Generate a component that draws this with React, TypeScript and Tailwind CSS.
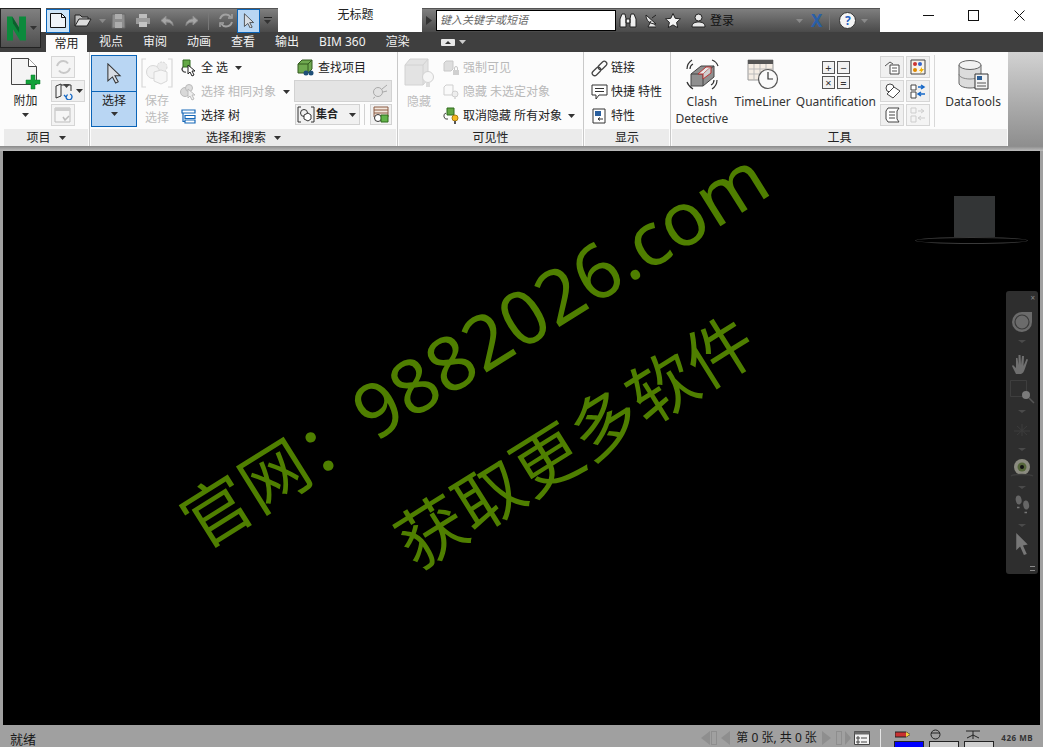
import React from "react";

const FONT = { fontFamily: '"Noto Sans", "Noto Sans CJK SC", sans-serif' };

function Caret({ light = false, className = "" }: { light?: boolean; className?: string }) {
  return (
    <svg width="7" height="4" viewBox="0 0 7 4" className={className}>
      <path d="M0 0h7L3.5 4z" fill={light ? "#8a8a8a" : "#333"} />
    </svg>
  );
}

/* ---- quick access icons ---- */
function QatNew() {
  return (
    <svg width="18" height="17" viewBox="0 0 18 17">
      <path d="M1.500 1.500h11l4 4v10h-15z" fill="#eef3f8" stroke="#111" />
      <path d="M12.500 1.500v4h4" fill="none" stroke="#111" />
    </svg>
  );
}
function QatOpen() {
  return (
    <svg width="18" height="15" viewBox="0 0 18 15">
      <path d="M1 13V2h5l2 2h6v2" fill="#bbb" stroke="#222" />
      <path d="M1 13l4-7h12l-4 7z" fill="#ddd" stroke="#222" />
    </svg>
  );
}
function QatSave() {
  return (
    <svg width="15" height="16" viewBox="0 0 15 16">
      <path d="M1 1h13v14H1z" fill="#8d8d8d" stroke="#666" />
      <path d="M4 1h7v5H4zM4 9h7v6H4z" fill="#adadad" />
    </svg>
  );
}
function QatPrint() {
  return (
    <svg width="16" height="15" viewBox="0 0 16 15">
      <path d="M4 1h8v4H4z" fill="#bdbdbd" />
      <path d="M1 5h14v6H1z" fill="#9c9c9c" />
      <path d="M4 9h8v5H4z" fill="#c4c4c4" />
    </svg>
  );
}
function QatUndo({ flip = false }: { flip?: boolean }) {
  return (
    <svg width="15" height="12" viewBox="0 0 15 12" className={flip ? "-scale-x-100" : ""}>
      <path d="M6 1L1 5.500 6 10V7c3 0 5 .5 7 3.500C13 6.500 10 4 6 4z" fill="#a6a6a6" stroke="#8c8c8c" />
    </svg>
  );
}
function QatRefresh() {
  return (
    <svg width="16" height="15" viewBox="0 0 16 15" fill="none" stroke="#a2a2a2" strokeWidth="2">
      <path d="M2 6c1-3 3-4.500 6-4.500 2 0 3.500 1 4.500 2.500" />
      <path d="M14 9c-1 3-3 4.500-6 4.500-2 0-3.500-1-4.500-2.500" />
      <path d="M14 1v4h-4M2 14v-4h4" strokeWidth="1.500" />
    </svg>
  );
}
function Arrow({ size = 17, fill = "#d8dde4" }: { size?: number; fill?: string }) {
  return (
    <svg width={size} height={size * 1.3} viewBox="0 0 17 22">
      <path d="M2 1l13 12.500H9.500l3.500 6.500-2.800 1.300-3.300-6.500L2 19z" fill={fill} stroke="#333" strokeWidth="1.100" />
    </svg>
  );
}

/* ---- ribbon icons ---- */
function AppendIcon() {
  return (
    <svg width="32" height="34" viewBox="0 0 32 34">
      <path d="M1.500 1.500h17l8 8v18h-25z" fill="#f4f4f4" stroke="#444" />
      <path d="M18.500 1.500v8h8" fill="#fff" stroke="#444" />
      <path d="M21 18h4v5h5v4h-5v5h-4v-5h-5v-4h5z" fill="#12a23a" stroke="#0a7a2a" strokeWidth=".5" />
    </svg>
  );
}
function SmallBox({ children, disabled = false, w = "w-[24px]" }: { children?: React.ReactNode; disabled?: boolean; w?: string }) {
  return (
    <div className={`${w} h-[22px] flex items-center justify-center border border-[#d6d6d6] ${disabled ? "bg-[#f4f4f4]" : "bg-[#f0f0f0]"}`}>
      {children}
    </div>
  );
}
function SyncIcon() {
  return (
    <svg width="17" height="16" viewBox="0 0 17 16" fill="none" stroke="#c8c8c8" strokeWidth="2">
      <path d="M2 7c1-3 3-5 6.500-5 2 0 3.500 1 4.500 2.500M15 9c-1 3-3 5-6.500 5-2 0-3.500-1-4.500-2.500" />
    </svg>
  );
}
function SheetsIcon() {
  return (
    <svg width="20" height="18" viewBox="0 0 20 18">
      <path d="M2 4l5-2v12l-5 2z" fill="#f3f3f3" stroke="#333" />
      <path d="M7 3h10v6" fill="none" stroke="#333" />
      <path d="M9 2h7l-3.500 4z" fill="#444" />
      <path d="M16 12a3 3 0 1 1-4 3M10 13l2 2 1.500-2.500" fill="none" stroke="#1266c4" strokeWidth="1.300" />
    </svg>
  );
}
function WindowCheckIcon() {
  return (
    <svg width="18" height="17" viewBox="0 0 18 17">
      <path d="M1 1h15v14H1z" fill="#f6f6f6" stroke="#bdbdbd" />
      <path d="M1 1h15v3H1z" fill="#cfcfcf" />
      <path d="M9 10l2 3 4-4" fill="none" stroke="#bbb" strokeWidth="1.500" />
    </svg>
  );
}
function SaveSelectionIcon() {
  return (
    <svg width="32" height="30" viewBox="0 0 32 30" fill="none" stroke="#d8d8d8">
      <path d="M5 1H1v28h4M27 1h4v28h-4" strokeWidth="1.200" />
      <circle cx="21" cy="9" r="5" fill="#ececec" strokeDasharray="2 1" />
      <circle cx="12" cy="14" r="6.500" fill="#f2f2f2" />
      <path d="M13 14l7-2 6 2v9l-6 3-7-3z" fill="#f6f6f6" />
    </svg>
  );
}
function SelectAllIcon() {
  return (
    <svg width="18" height="18" viewBox="0 0 18 18">
      <path d="M4 8a3 3 0 0 0 3 5" fill="none" stroke="#444" strokeWidth="1.200" />
      <path d="M4 1h7v7H4z" fill="#64a846" stroke="#2f6a1c" />
      <path d="M9 6l7 6h-3l2 4-2 1-2-4-2 2z" fill="#fff" stroke="#222" />
    </svg>
  );
}
function SameIcon() {
  return (
    <svg width="18" height="18" viewBox="0 0 18 18">
      <circle cx="6" cy="9" r="4.500" fill="#d8d8d8" stroke="#bbb" />
      <circle cx="10" cy="5" r="3.500" fill="#ddd" stroke="#bbb" />
      <path d="M9 6l7 6h-3l2 4-2 1-2-4-2 2z" fill="#eee" stroke="#bcbcbc" />
    </svg>
  );
}
function TreeIcon() {
  return (
    <svg width="15" height="15" viewBox="0 0 15 15" fill="#fff" stroke="#1668b8" strokeWidth="1.200">
      <path d="M1 1h13v3H1zM4 6.500h10v3H4zM4 11h10v3H4z" />
      <path d="M2 4v8.500h2" fill="none" />
    </svg>
  );
}
function FindIcon() {
  return (
    <svg width="17" height="18" viewBox="0 0 17 18">
      <path d="M1 5l4-4h10v9l-4 4H1z" fill="#6fa94f" stroke="#33591f" />
      <path d="M1 5h10v9M11 5l4-4" fill="none" stroke="#33591f" />
      <circle cx="9" cy="14" r="2.500" fill="#1f4f78" />
      <circle cx="14" cy="14" r="2.500" fill="#1f4f78" />
    </svg>
  );
}
function SearchGhost() {
  return (
    <svg width="17" height="15" viewBox="0 0 17 15" fill="none" stroke="#a9a9a9">
      <circle cx="6" cy="8" r="4.500" fill="#e2e2e2" />
      <path d="M3 13l-2 1.500M10 5l5-4M11 8l4-1" />
    </svg>
  );
}
function SetIcon() {
  return (
    <svg width="18" height="17" viewBox="0 0 18 17" fill="none" stroke="#333">
      <path d="M4 1H1v15h3M14 1h3v15h-3" />
      <circle cx="7" cy="7" r="3.500" />
      <path d="M7 9l4-2 3 2v4l-3 2-4-2z" fill="#fff" />
    </svg>
  );
}
function SetManageIcon() {
  return (
    <svg width="18" height="17" viewBox="0 0 18 17">
      <path d="M2 1h14v10H2z" fill="#f2e6dc" stroke="#8a5b42" />
      <path d="M2 4h14M2 7h14" stroke="#8a5b42" />
      <circle cx="6" cy="12" r="3.500" fill="#fff" stroke="#333" />
      <path d="M9 9h7v7H9z" fill="#62b44a" stroke="#2f6a1c" />
    </svg>
  );
}
function HideBigIcon() {
  return (
    <svg width="32" height="32" viewBox="0 0 32 32">
      <path d="M2 8l5-6h18v20l-5 6H2z" fill="#e3e3e3" stroke="#d2d2d2" />
      <path d="M2 8h18v20M20 8l5-6" fill="none" stroke="#d2d2d2" />
      <circle cx="25" cy="20" r="5.500" fill="#f6f6f6" stroke="#d2d2d2" />
      <path d="M23 26h4v4h-4z" fill="#ddd" />
    </svg>
  );
}
function LockIcon() {
  return (
    <svg width="17" height="16" viewBox="0 0 17 16">
      <path d="M1 3l2-2h7v8l-2 2H1z" fill="#dedede" stroke="#c8c8c8" />
      <path d="M10 10h6v5h-6z" fill="#d0d0d0" />
      <path d="M11.500 10V8a1.500 1.500 0 0 1 3 0v2" fill="none" stroke="#c8c8c8" />
    </svg>
  );
}
function HideUnselectedIcon() {
  return (
    <svg width="17" height="16" viewBox="0 0 17 16">
      <path d="M1 3l2-2h7v10H1z" fill="#fafafa" stroke="#cfcfcf" />
      <circle cx="12" cy="10" r="3" fill="#eee" stroke="#cfcfcf" />
      <path d="M11 13h2v2h-2z" fill="#ddd" />
    </svg>
  );
}
function UnhideIcon() {
  return (
    <svg width="17" height="18" viewBox="0 0 17 18">
      <path d="M3 6a3 3 0 0 0 2 6" fill="none" stroke="#444" />
      <path d="M4 1h7v7H4z" fill="#62a644" stroke="#2f6a1c" />
      <circle cx="12" cy="11" r="3" fill="#f4b820" stroke="#a87b10" />
      <path d="M11 14h2v3h-2z" fill="#555" />
    </svg>
  );
}
function ChainIcon() {
  return (
    <svg width="17" height="17" viewBox="0 0 17 17" fill="none" stroke="#444" strokeWidth="1.300">
      <rect x=".5" y="9" width="10" height="5" rx="2.500" transform="rotate(-45 5.500 11.500)" />
      <rect x="6.500" y="3" width="10" height="5" rx="2.500" transform="rotate(-45 11.500 5.500)" />
    </svg>
  );
}
function BubbleIcon() {
  return (
    <svg width="17" height="17" viewBox="0 0 17 17" fill="#fff" stroke="#333">
      <path d="M1 1h15v10H8l-3 4v-4H1z" />
      <path d="M4 4.500h9M4 7.500h9" />
    </svg>
  );
}
function PropsIcon() {
  return (
    <svg width="15" height="16" viewBox="0 0 15 16">
      <path d="M1 1h12v14H1z" fill="#fff" stroke="#333" />
      <path d="M3 3h6v5H3z" fill="#2a5f9e" />
      <path d="M6 11h5M6 11l2-1.500M6 11l2 1.500" stroke="#333" fill="none" />
    </svg>
  );
}
function ClashIcon() {
  return (
    <svg width="36" height="34" viewBox="0 0 36 34">
      <path d="M7 16l10-8h13v11l-11 9H7z" fill="#8f8f8f" stroke="#444" />
      <path d="M7 16h12v12M19 16l11-8" fill="none" stroke="#444" />
      <path d="M14 16l8-7h5l-8 7z" fill="#e8e8e8" stroke="#b33" />
      <path d="M19 16v5l8-6V9" fill="#d0d0d0" stroke="#b33" />
      <g fill="none" stroke="#333" strokeWidth="1.200">
        <path d="M3 11c0-4 2-7 5-9M6 11c0-2 1-4 3-5" />
        <path d="M33 22c0 4-2 7-5 9M30 22c0 2-1 4-3 5" />
        <path d="M28 2c3 1 5 3 6 6M3 24c1 3 3 5 6 7" />
      </g>
    </svg>
  );
}
function TimeLinerIcon() {
  return (
    <svg width="32" height="31" viewBox="0 0 32 31">
      <path d="M1 1h25v20H1z" fill="#f5ede4" stroke="#999" />
      <path d="M1 1h25v4H1z" fill="#555" />
      <path d="M1 10h25M1 15h25M7 5v16M13 5v16M19 5v16" stroke="#bbb" />
      <circle cx="21" cy="20" r="9.500" fill="#fafafa" stroke="#555" strokeWidth="1.200" />
      <path d="M21 13v7h5" fill="none" stroke="#333" strokeWidth="1.200" />
    </svg>
  );
}
function QuantIcon() {
  const cells = ["+", "−", "×", "="];
  return (
    <div className="grid grid-cols-2 gap-[2px] w-[28px]">
      {cells.map((c) => (
        <div key={c} className="w-[13px] h-[13px] bg-[#f2f2f2] border border-[#555] flex items-center justify-center text-[11px] leading-none text-[#333]">
          {c}
        </div>
      ))}
    </div>
  );
}
function DataToolsIcon() {
  return (
    <svg width="32" height="32" viewBox="0 0 32 32">
      <path d="M2 6v18c0 3 5 5 11 5s11-2 11-5V6" fill="#dcdcdc" stroke="#666" />
      <ellipse cx="13" cy="6" rx="11" ry="4.500" fill="#f2f2f2" stroke="#666" />
      <path d="M2 15c0 3 5 5 11 5s11-2 11-5" fill="none" stroke="#888" />
      <path d="M18 15h13v15H18z" fill="#f4f4f4" stroke="#333" />
      <path d="M20 17h5v4h-5z" fill="#2d5f95" />
      <path d="M20 24h9M20 27h9" stroke="#555" />
    </svg>
  );
}
function MiniTool({ kind }: { kind: number }) {
  const icons: React.ReactNode[] = [
    <svg key="a" width="16" height="15" viewBox="0 0 16 15"><path d="M1 6l5-4 3 2" fill="none" stroke="#555" /><path d="M6 5h9v9H6z" fill="#fff" stroke="#444" /><path d="M8 8h5M8 11h5" stroke="#555" /></svg>,
    <svg key="b" width="16" height="16" viewBox="0 0 16 16"><path d="M1 1h14v14H1z" fill="#f7f2ea" stroke="#444" /><circle cx="5" cy="5" r="2" fill="#c33" /><circle cx="10" cy="5" r="2" fill="#36c" /><circle cx="5" cy="11" r="2" fill="#d80" /><path d="M12 8l-3 4h2l-1 3 4-5h-2z" fill="#f2b200" /></svg>,
    <svg key="c" width="17" height="16" viewBox="0 0 17 16" fill="#fff" stroke="#444"><circle cx="6" cy="5" r="4" /><path d="M3 11l7-7 6 4-7 7z" /></svg>,
    <svg key="d" width="16" height="16" viewBox="0 0 16 16"><path d="M1 2h5v5H1zM1 9h5v6H1z" fill="#fff" stroke="#444" /><path d="M8 4h5M11 2l3 2-3 2" fill="none" stroke="#1668c8" strokeWidth="1.500" /><path d="M15 11H9M11 9l-3 2 3 2" fill="none" stroke="#1668c8" strokeWidth="1.500" /></svg>,
    <svg key="e" width="15" height="16" viewBox="0 0 15 16" fill="#fff" stroke="#444"><path d="M3 1h11l-2 3v8l2 3H3l-2-3V4z" /><path d="M4 5h6M4 8h6M4 11h6" /></svg>,
    <svg key="f" width="16" height="16" viewBox="0 0 16 16" fill="none" stroke="#cdcdcd"><path d="M1 1h5v5H1zM1 9h5v6H1z" /><path d="M8 4h5M11 2l3 2-3 2M15 11H9M11 9l-3 2 3 2" /></svg>,
  ];
  return icons[kind];
}

/* ---- ribbon structure ---- */
function Panel({ title, caret = false, width, children }: { title: string; caret?: boolean; width: string; children: React.ReactNode }) {
  return (
    <div className={`${width} shrink-0 flex flex-col border-r border-[#c9c9c9]`}>
      <div className="h-[77px] flex">{children}</div>
      <div className="h-[17px] mx-[1px] bg-[#ebebeb] flex items-center justify-center gap-[8px] text-[12px] text-[#222]">
        {title}
        {caret && <Caret />}
      </div>
    </div>
  );
}
function Row({ icon, label, muted = false, caret = false, gap = "gap-[5px]" }: { icon: React.ReactNode; label: string; muted?: boolean; caret?: boolean; gap?: string }) {
  return (
    <div className={`h-[24px] flex items-center ${gap} text-[12px] whitespace-pre ${muted ? "text-[#b9b9b9]" : "text-[#222]"}`}>
      <div className="w-[18px] flex justify-center">{icon}</div>
      <span>{label}</span>
      {caret && <Caret className="ml-[3px]" />}
    </div>
  );
}
function ToolColumn({ icon, width, children }: { icon: React.ReactNode; width: string; children: React.ReactNode }) {
  return (
    <div className={`${width} flex flex-col items-center pt-[4px]`}>
      <div className="h-[37px] flex items-center">{icon}</div>
      {children}
    </div>
  );
}

function Ribbon() {
  return (
    <div className="h-[94px] flex bg-[#fcfcfc] pl-[3px]">
      <Panel title="项目" caret width="w-[87px]">
        <div className="w-[45px] flex flex-col items-center pt-[5px]">
          <AppendIcon />
          <div className="text-[12px] text-[#222] leading-[16px] mt-[2px]">附加</div>
          <Caret className="mt-[4px]" />
        </div>
        <div className="flex flex-col gap-[2px] pt-[4px] pl-[3px]">
          <SmallBox disabled><SyncIcon /></SmallBox>
          <SmallBox w="w-[34px]">
            <div className="flex items-center gap-[2px]"><SheetsIcon /><Caret /></div>
          </SmallBox>
          <SmallBox disabled><WindowCheckIcon /></SmallBox>
        </div>
      </Panel>
      <Panel title="选择和搜索" caret width="w-[308px]">
        <div className="w-[46px] h-[72px] mt-[3px] ml-[1px] bg-[#b9d6f3] border border-[#0a64b8] flex flex-col items-center">
          <div className="h-[36px] flex items-center justify-center border-b border-[#0a64b8] w-full">
            <Arrow size={16} />
          </div>
          <div className="text-[12px] text-[#222] leading-[16px] mt-[1px]">选择</div>
          <Caret className="mt-[3px]" />
        </div>
        <div className="w-[40px] flex flex-col items-center pt-[6px] text-[12px] leading-[17px] text-[#bdbdbd]">
          <SaveSelectionIcon />
          <div className="mt-[4px]">保存</div>
          <div>选择</div>
        </div>
        <div className="w-[117px] pt-[4px] pl-[2px]">
          <Row icon={<SelectAllIcon />} label="全 选" gap="gap-[4px]" caret />
          <Row icon={<SameIcon />} label="选择 相同对象" muted gap="gap-[4px]" caret />
          <Row icon={<TreeIcon />} label="选择 树" gap="gap-[4px]" />
        </div>
        <div className="w-[99px] pt-[4px]">
          <div className="h-[24px] pl-[3px] flex items-center gap-[4px] text-[12px] text-[#222]">
            <FindIcon />
            查找项目
          </div>
          <div className="w-[98px] h-[22px] bg-[#e4e4e4] border border-[#d2d2d2] flex items-center justify-end pr-[2px]">
            <SearchGhost />
          </div>
          <div className="flex items-center mt-[2px]">
            <div className="w-[65px] h-[21px] ml-[1px] bg-[#f1f1f1] border border-[#d2d2d2] flex items-center pl-[1px] text-[11px] font-bold text-[#222]">
              <SetIcon />
              <span className="ml-[1px]">集合</span>
              <Caret className="ml-auto mr-[3px]" />
            </div>
            <div className="w-px h-[21px] bg-[#d2d2d2] ml-[4px]" />
            <div className="w-[22px] h-[21px] ml-[5px] bg-[#f1f1f1] border border-[#d2d2d2] flex items-center justify-center">
              <SetManageIcon />
            </div>
          </div>
        </div>
      </Panel>
      <Panel title="可见性" width="w-[186px]">
        <div className="w-[42px] flex flex-col items-center pt-[5px] text-[12px] text-[#bdbdbd]">
          <HideBigIcon />
          <div className="mt-[4px]">隐藏</div>
        </div>
        <div className="pt-[4px] pl-[2px]">
          <Row icon={<LockIcon />} label="强制可见" muted gap="gap-[3px]" />
          <Row icon={<HideUnselectedIcon />} label="隐藏 未选定对象" muted gap="gap-[3px]" />
          <Row icon={<UnhideIcon />} label="取消隐藏 所有对象" gap="gap-[3px]" caret />
        </div>
      </Panel>
      <Panel title="显示" width="w-[87px]">
        <div className="pt-[4px] pl-[6px]">
          <Row icon={<ChainIcon />} label="链接" gap="gap-[3px]" />
          <Row icon={<BubbleIcon />} label="快捷 特性" gap="gap-[3px]" />
          <Row icon={<PropsIcon />} label="特性" gap="gap-[3px]" />
        </div>
      </Panel>
      <div className="w-[337px] shrink-0 flex flex-col">
        <div className="h-[77px] flex text-[12px] text-[#333] leading-[17px]">
          <ToolColumn icon={<ClashIcon />} width="w-[62px]">
            <div>Clash</div>
            <div>Detective</div>
          </ToolColumn>
          <ToolColumn icon={<TimeLinerIcon />} width="w-[60px]">
            <div>TimeLiner</div>
          </ToolColumn>
          <ToolColumn icon={<QuantIcon />} width="w-[87px]">
            <div>Quantification</div>
          </ToolColumn>
          <div className="grid grid-cols-2 gap-[2px] content-start pt-[4px] w-[50px] ml-[1px]">
            {[0, 1, 2, 3, 4, 5].map((k) => (
              <SmallBox key={k} disabled={k === 5}><MiniTool kind={k} /></SmallBox>
            ))}
          </div>
          <div className="w-px h-[72px] mt-[3px] ml-[4px] bg-[#d8d8d8]" />
          <div className="ml-[3px]">
            <ToolColumn icon={<DataToolsIcon />} width="w-[70px]">
              <div>DataTools</div>
            </ToolColumn>
          </div>
        </div>
        <div className="h-[17px] mx-[1px] bg-[#ebebeb] flex items-center justify-center text-[12px] text-[#222]">工具</div>
      </div>
      <div className="flex-1 bg-gradient-to-b from-[#d2d2d2] to-[#8e8e8e]" />
    </div>
  );
}

function NavCaret({ className }: { className: string }) {
  return <div className={`w-0 h-0 border-x-[4px] border-x-transparent border-t-[3px] border-t-[#4a4a4a] ${className}`} />;
}

function NavBar() {
  return (
    <div className="absolute right-[2px] top-[140px] w-[32px] h-[283px] bg-[#2e2e2e] rounded-[3px] flex flex-col items-center">
      <div className="self-end mr-[3px] mt-[2px] h-[10px] text-[#8a8a8a] text-[8px] leading-[10px]">×</div>
      <svg width="22" height="22" viewBox="0 0 22 22" className="mt-[8px]">
        <path d="M11 1h10v10a10 10 0 1 1-10-10z" fill="#6b6b6b" />
        <circle cx="11" cy="11" r="7" fill="none" stroke="#3a3a3a" strokeWidth="1.200" />
      </svg>
      <NavCaret className="mt-[7px]" />
      <svg width="22" height="22" viewBox="0 0 22 22" className="mt-[10px]">
        <path d="M5 21L1 13l1-1 3 3 0-10 1.500 0 1 7 0-10h2l.5 10 1-9h2l-.5 10 3-7 1.500.5-3 9c-1 3-2 5-4 5.500z" fill="#6f6f6f" />
      </svg>
      <svg width="26" height="27" viewBox="0 0 26 27" className="mt-[4px]">
        <path d="M1.500 1.500h16v16h-16z" fill="none" stroke="#3e3e3e" />
        <circle cx="17" cy="16" r="4" fill="#7b7b7b" />
        <path d="M20 19l5 5" stroke="#555" strokeWidth="1.500" />
      </svg>
      <NavCaret className="mt-[4px]" />
      <svg width="20" height="14" viewBox="0 0 20 14" className="mt-[10px]" fill="none" stroke="#3c3c3c">
        <path d="M2 8h16M10 1v12M5 12l10-9M5 3l10 9" />
      </svg>
      <NavCaret className="mt-[11px]" />
      <svg width="26" height="24" viewBox="0 0 26 24" className="mt-[7px]">
        <circle cx="13" cy="9" r="8" fill="#8b8b80" />
        <circle cx="13" cy="9" r="4.500" fill="#55663a" />
        <circle cx="13" cy="9" r="2" fill="#111" />
        <path d="M2 18c3-2 19-2 22 0" fill="none" stroke="#3e3e3e" strokeWidth="1.500" />
      </svg>
      <NavCaret className="mt-[4px]" />
      <svg width="20" height="20" viewBox="0 0 20 24" className="mt-[6px]">
        <ellipse cx="6" cy="6" rx="3.500" ry="5.500" fill="#666" transform="rotate(-10 6 6)" />
        <ellipse cx="15" cy="12" rx="3.500" ry="5.500" fill="#666" transform="rotate(-10 15 12)" />
        <path d="M4 14h3v2H4zM13 20h3v2h-3z" fill="#777" />
      </svg>
      <NavCaret className="mt-[9px]" />
      <svg width="14" height="23" viewBox="0 0 14 24" className="mt-[6px]">
        <path d="M1 0l12 12-5 1 4 9-3 1-4-9-4 4z" fill="#777" />
      </svg>
      <div className="mt-auto mb-[3px] self-end mr-[3px] w-[5px] h-[5px] border-y border-[#8a8a8a]" />
    </div>
  );
}

function ViewCube() {
  return (
    <div className="absolute top-[45px] right-[12px] w-[113px] flex flex-col items-center">
      <div className="w-[41px] h-[41px] bg-[#333536] ml-[5px]" />
      <div className="w-[113px] h-[7px] rounded-[50%] border border-[#3a3a3a] bg-black" />
    </div>
  );
}

function Watermark() {
  return (
    <div className="absolute inset-0 flex items-center justify-center pointer-events-none">
      <div className="-rotate-[32deg] flex flex-col items-center text-[#4f7f00] text-[68px] leading-[100px] whitespace-nowrap -translate-x-[14px] -translate-y-[34px]">
        <div>官网：<span className="text-[75px]">9882026.com</span></div>
        <div className="mt-[31px] ml-[75px]">获取更多软件</div>
      </div>
    </div>
  );
}

function StatusBar() {
  const tri = "w-0 h-0 border-y-[7px] border-y-transparent";
  return (
    <div className="h-[22px] bg-[#a0a0a0] flex text-[12px] text-[#1a1a1a] overflow-hidden">
      <div className="pl-[10px] pt-[5px] leading-[18px] text-[13px]">就绪</div>
      <div className="ml-auto h-full flex items-center">
        <div className="flex items-center pt-[3px]">
          <div className={`${tri} border-r-[9px] border-r-[#8e8e8e]`} />
          <div className="w-[6px] h-[14px] ml-[1px] border border-[#8e8e8e]" />
          <div className={`${tri} border-r-[9px] border-r-[#8e8e8e] ml-[4px]`} />
          <div className="ml-[6px] w-[80px] text-[12px] whitespace-pre">第 0 张, 共 0 张</div>
          <div className={`${tri} border-l-[9px] border-l-[#8e8e8e] ml-[6px]`} />
          <div className="w-[6px] h-[14px] ml-[5px] border border-[#8e8e8e]" />
          <div className={`${tri} border-l-[6px] border-l-[#8e8e8e] ml-[3px]`} />
          <svg width="16" height="14" viewBox="0 0 16 14" className="ml-[3px]">
            <path d="M.5.500h15v13H.5z" fill="#f2f2f2" stroke="#444" />
            <path d="M.5.500h15v3H.5z" fill="#6a6a6a" />
            <path d="M3 6h2v2H3zM3 10h2v2H3zM7 7h6M7 11h6" fill="none" stroke="#444" />
          </svg>
          <div className="w-px h-[18px] bg-[#e4e4e4] ml-[10px]" />
        </div>
        <Meter color="bg-[#0000ff]" ml="ml-[13px]"><svg width="16" height="7" viewBox="0 0 16 7"><path d="M0 1h11l4 2.500-4 2.500H0z" fill="#c83030" stroke="#222" /><path d="M11 1l4 2.500-4 2.500z" fill="#f0d040" /></svg></Meter>
        <Meter color="bg-[#d0d0d0]" ml="ml-[5px]"><svg width="11" height="11" viewBox="0 0 11 11" fill="none" stroke="#222"><ellipse cx="5.500" cy="5.500" rx="4.500" ry="4.500" /><path d="M1 4h9" /></svg></Meter>
        <Meter color="bg-[#d0d0d0]" ml="ml-[5px]"><svg width="16" height="11" viewBox="0 0 16 11" fill="none" stroke="#222"><path d="M1 2h14M8 2v8M8 6L2 9M8 6l6 3" /></svg></Meter>
        <div className="ml-[7px] mr-[10px] pt-[3px] text-[8px] text-[#333] tracking-[0.5px] font-bold">426 MB</div>
      </div>
    </div>
  );
}

function Meter({ color, ml, children }: { color: string; ml: string; children: React.ReactNode }) {
  return (
    <div className={`${ml} w-[30px] h-full flex flex-col items-center justify-end`}>
      <div className="h-[13px] flex items-center self-start pl-[1px]">{children}</div>
      <div className={`w-[30px] h-[6px] ${color} border border-b-0 border-[#222]`} />
    </div>
  );
}

export default function App() {
  return (
    <div className="w-[1043px] h-[747px] overflow-hidden flex flex-col bg-[#a0a0a0]" style={FONT}>
      {/* title + tabs */}
      <div className="h-[52px] flex bg-white">
        <div className="w-[41px] shrink-0 pt-[8px] flex flex-col">
          <div className="h-[40px] bg-gradient-to-b from-[#808080] to-[#505050] border border-[#222] flex items-center pl-[6px] gap-[4px]">
            <svg width="19" height="25" viewBox="0 0 22 28">
              <path d="M0 0h6l8 13V0h8v28h-7L7 15v13H0z" fill="#0c8a3c" />
              <path d="M6 0l8 13v6L7 8z" fill="#0b5f2d" />
            </svg>
            <Caret />
          </div>
          <div className="flex-1 bg-[#3f3f3f]" />
        </div>
        <div className="flex-1 flex flex-col min-w-0">
          <div className="h-[32px] flex items-end relative">
            <div className="ml-[5px] w-[232px] h-[24px] border-t border-[#555] bg-gradient-to-b from-[#7f7f7f] to-[#4a4a4a] flex items-center">
              <div className="w-[24px] h-[24px] bg-[#cde4f7] border border-[#0a64b8] flex items-center justify-center"><QatNew /></div>
              <div className="ml-[4px] flex items-center gap-[7px]"><QatOpen /><Caret light /></div>
              <div className="ml-[5px] flex items-center gap-[9px]">
                <QatSave /><QatPrint /><QatUndo /><QatUndo flip />
              </div>
              <div className="w-px h-[18px] bg-[#777] ml-[9px]" />
              <div className="ml-[9px]"><QatRefresh /></div>
              <div className="w-[23px] h-[24px] ml-[3px] bg-[#b9d6f3] border border-[#0a64b8] flex items-center justify-center"><Arrow size={12} /></div>
              <div className="ml-[3px] w-[9px] flex flex-col items-center gap-[2px]">
                <div className="w-[8px] h-px bg-[#222]" />
                <Caret />
              </div>
            </div>
            <div className="w-[144px] h-[24px] mb-[5px] pl-[11px] flex items-center justify-center text-[12px] text-[#222]">无标题</div>
            <div className="w-[458px] h-[24px] border-t border-[#555] bg-gradient-to-b from-[#7f7f7f] to-[#4a4a4a] flex items-center">
              <svg width="6" height="9" viewBox="0 0 6 9" className="ml-[4px]"><path d="M0 0l6 4.500L0 9z" fill="#333" /></svg>
              <div className="ml-[4px] w-[180px] h-[21px] bg-white border border-black flex items-center pl-[3px] text-[11px] italic text-[#666]">键入关键字或短语</div>
              <svg width="18" height="15" viewBox="0 0 18 15" className="ml-[3px]">
                <path d="M1 14V6l2-5h3l1 5v8zM11 14V6l1-5h3l2 5v8zM7 6h4v4H7z" fill="#f0f0f0" stroke="#222" />
              </svg>
              <svg width="15" height="15" viewBox="0 0 15 15" className="ml-[7px]">
                <path d="M2 2c0 6 4 9 10 9zM7 8l-3 6h8" fill="#e6e6e6" stroke="#222" />
                <path d="M8 5l4-3" stroke="#222" />
              </svg>
              <svg width="16" height="15" viewBox="0 0 16 15" className="ml-[6px]">
                <path d="M8 .5l2.200 4.800 5.300.6-3.900 3.500 1.100 5.200L8 11.900l-4.700 2.700 1.100-5.200L.5 5.900l5.300-.6z" fill="#f4f4f4" stroke="#222" />
              </svg>
              <svg width="15" height="15" viewBox="0 0 15 15" className="ml-[10px]">
                <circle cx="7.500" cy="4.500" r="3.500" fill="#e8e8e8" stroke="#222" />
                <path d="M1 14c0-4 3-5 6.500-5s6.500 1 6.500 5z" fill="#e8e8e8" stroke="#222" />
              </svg>
              <span className="ml-[4px] text-[12px] text-[#111]">登录</span>
              <Caret light className="ml-[62px]" />
              <span className="ml-[8px] text-[17px] leading-none font-bold text-[#2a5fa8]">X</span>
              <div className="w-px h-[18px] bg-[#777] ml-[7px]" />
              <div className="ml-[9px] w-[17px] h-[17px] rounded-full bg-[#f4f4f4] border border-[#333] flex items-center justify-center text-[12px] leading-none font-bold text-[#1f5fc0]">?</div>
              <Caret light className="ml-[5px]" />
            </div>
            <div className="flex-1 h-full flex items-center pb-[2px] text-[#111]">
              <div className="ml-[43px] w-[11px] h-px bg-[#111]" />
              <div className="ml-[34px] w-[11px] h-[11px] border border-[#111]" />
              <svg width="11" height="11" viewBox="0 0 11 11" className="ml-[35px]" stroke="#111" fill="none"><path d="M.5.500l10 10M10.500.500l-10 10" /></svg>
            </div>
          </div>
          <div className="h-[20px] bg-[#3f3f3f] flex items-end pl-[5px] text-[12px] text-[#f2f2f2]">
            <div className="w-[41px] h-[17px] bg-[#fcfcfc] text-[#222] flex items-center justify-center">常用</div>
            <div className="flex items-center h-[20px] gap-[20px] ml-[12px]">
              <span>视点</span>
              <span>审阅</span>
              <span>动画</span>
              <span>查看</span>
              <span>输出</span>
              <span>BIM 360</span>
              <span>渲染</span>
            </div>
            <div className="flex items-center h-[20px] ml-[31px] gap-[4px]">
              <div className="w-[14px] h-[7px] bg-[#e8e8e8] rounded-[1px] flex items-center justify-center"><div className="w-0 h-0 border-x-[3px] border-x-transparent border-b-[3px] border-b-[#333]" /></div>
              <Caret className="invert" />
            </div>
          </div>
        </div>
      </div>

      <Ribbon />

      <div className="h-[5px] bg-gradient-to-b from-[#8a8a8a] to-[#bdbdbd]" />

      {/* viewport */}
      <div className="h-[574px] mx-[3px] bg-black relative overflow-hidden">
        <Watermark />
        <ViewCube />
        <NavBar />
      </div>

      <StatusBar />
    </div>
  );
}
